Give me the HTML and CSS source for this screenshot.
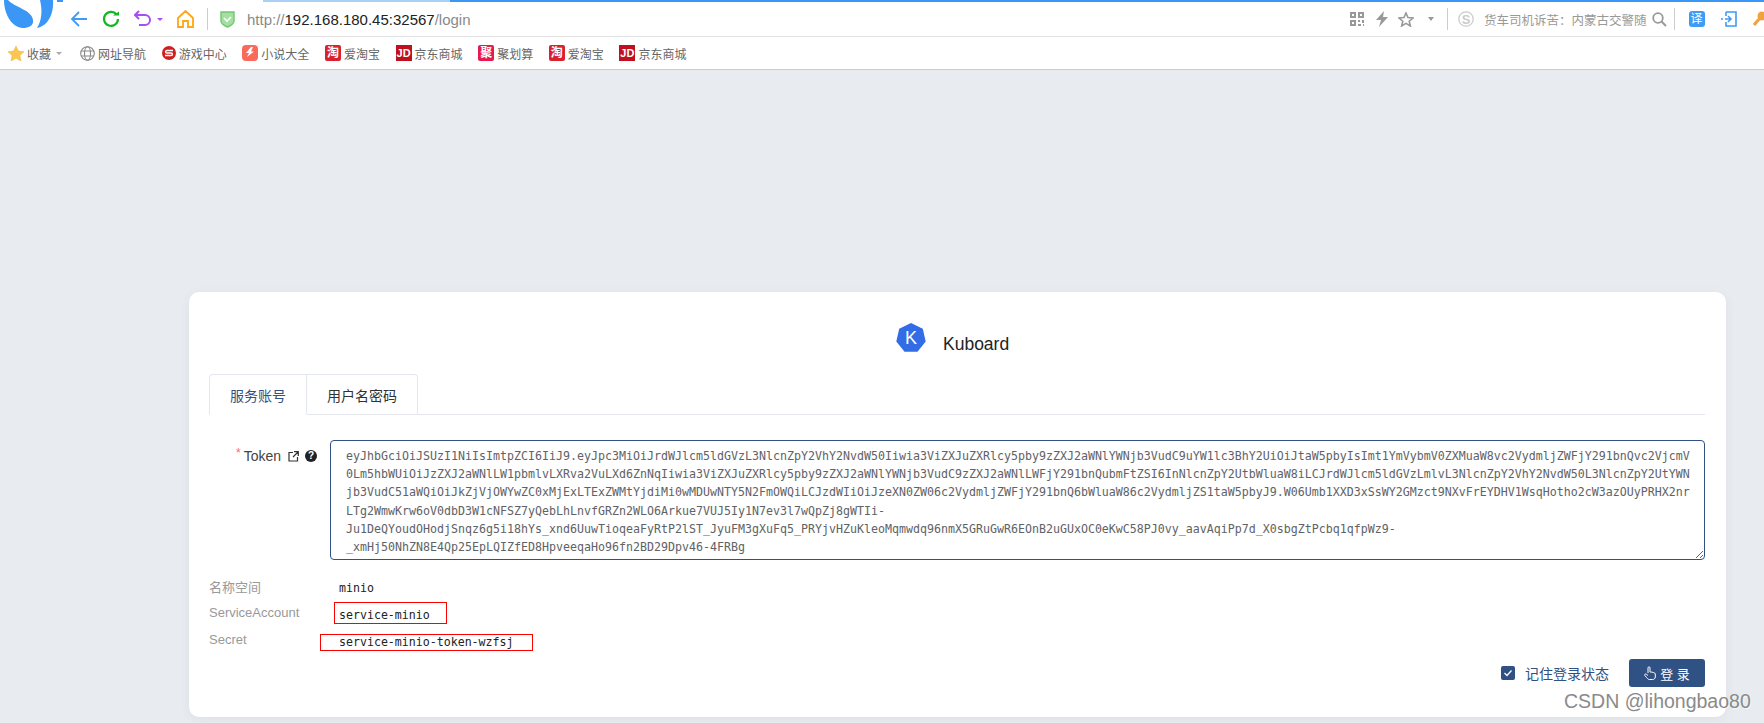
FILE: index.html
```html
<!DOCTYPE html>
<html lang="en">
<head>
    <meta charset="UTF-8">
    <title>Kuboard</title>
    <link rel="stylesheet" href="styles.css">
</head>
<body>
    <div class="progress"><span class="progress-done"></span></div>
    <svg class="app-logo" width="66" height="30" viewBox="0 0 66 30">
        <path d="M4 0H8C14 7 32 10 33 20C34 26 28 28 23 28C12 28 4 14 4 0Z" fill="#3b97f5"/>
        <path d="M40 0H53C54 14 48 26 37 28C41 22 43 12 40 0Z" fill="#3b97f5"/>
        <rect x="57" y="0" width="6" height="2" fill="#3b97f5"/>
    </svg>

    <header class="toolbar">
        <svg class="ico back" width="18" height="18" viewBox="0 0 18 18"><path d="M9 2L2 9L9 16M2 9H17" fill="none" stroke="#3f9bf5" stroke-width="1.8"/></svg>
        <svg class="ico reload" width="18" height="18" viewBox="0 0 18 18"><path d="M14.5 4.5A7 7 0 1 0 16 9" fill="none" stroke="#12b81f" stroke-width="2.2"/><path d="M11 5.500H17V1.500Z" fill="#12b81f"/></svg>
        <svg class="ico undo" width="18" height="18" viewBox="0 0 18 18"><path d="M1 5H11A5 5 0 0 1 11 15H5" fill="none" stroke="#a64ff0" stroke-width="2"/><path d="M5 1L1 5L5 9" fill="none" stroke="#a64ff0" stroke-width="2"/></svg>
        <span class="caret undo-caret"></span>
        <svg class="ico home" width="17" height="18" viewBox="0 0 17 18"><path d="M1 8L8.500 1L16 8V17H11V11H6V17H1Z" fill="none" stroke="#ffa516" stroke-width="1.800"/></svg>
        <span class="sep sep-url"></span>
        <svg class="ico shield" width="15" height="18" viewBox="0 0 15 18"><path d="M1 2H14V11C14 14 10 16 7.500 17C5 16 1 14 1 11Z" fill="#a4dfa2" stroke="#74c672" stroke-width="1.400"/><path d="M4 8L7 11L11 7" fill="none" stroke="#fff" stroke-width="1.600"/></svg>
        <div class="url">http://<b>192.168.180.45:32567</b>/login</div>
        <div class="toolbar-right">
            <svg class="ico" width="14" height="14" viewBox="0 0 14 14" fill="#999"><path d="M0 0H6V6H0ZM2 2V4H4V2ZM8 0H14V6H8ZM10 2V4H12V2ZM0 8H6V14H0ZM2 10V12H4V10ZM8 8H10V10H8ZM12 8H14V11H12ZM8 12H11V14H8ZM13 12H14V14H13Z" fill-rule="evenodd"/></svg>
            <svg class="ico bolt" width="12" height="16" viewBox="0 0 12 16"><path d="M8 0L0 9H5L3 16L12 6H7Z" fill="#999"/></svg>
            <svg class="ico star-o" width="16" height="15" viewBox="0 0 16 15"><path d="M8 1L10 5.600L15 6L11.200 9.200L12.400 14L8 11.400L3.600 14L4.800 9.200L1 6L6 5.600Z" fill="none" stroke="#999" stroke-width="1.600"/></svg>
            <span class="caret search-caret"></span>
            <span class="sep sep-search"></span>
            <svg class="ico sogou" width="16" height="16" viewBox="0 0 16 16"><circle cx="8" cy="8" r="7.200" fill="none" stroke="#ccc" stroke-width="1.300"/><text x="8" y="12.500" text-anchor="middle" class="sogou-s">S</text></svg>
            <div class="search-text">货车司机诉苦：内蒙古交警随</div>
            <svg class="ico" width="15" height="15" viewBox="0 0 15 15"><circle cx="6" cy="6" r="4.800" fill="none" stroke="#999" stroke-width="1.800"/><path d="M9.500 9.500L14 14" stroke="#999" stroke-width="2"/></svg>
            <span class="sep sep-tools"></span>
            <span class="fanyi">译</span>
            <svg class="ico" width="16" height="16" viewBox="0 0 16 16"><path d="M5 1H15V15H5V11M5 5V1" fill="none" stroke="#3f9bf5" stroke-width="1.600"/><path d="M0 8H2M4 8H10M7 5L10 8L7 11" fill="none" stroke="#3f9bf5" stroke-width="1.600"/></svg>
            <svg class="ico key" width="13" height="16" viewBox="0 0 13 16"><circle cx="9" cy="5" r="4.500" fill="#f2a23c"/><path d="M7 7L1 14" stroke="#f2a23c" stroke-width="3"/></svg>
        </div>
    </header>

    <nav class="bookmarks">
        <div class="mark fav">
            <svg width="16" height="15" viewBox="0 0 16 15"><path d="M8 0L10.400 5L16 5.700L11.900 9.500L13 15L8 12.300L3 15L4.100 9.500L0 5.700L5.600 5Z" fill="#fbc74f" stroke="#e9b04a" stroke-width=".5"/></svg>
            <span>收藏</span>
            <span class="caret fav-caret"></span>
        </div>
        <div class="mark">
            <svg width="15" height="15" viewBox="0 0 15 15"><g fill="none" stroke="#888" stroke-width="1.100"><circle cx="7.500" cy="7.500" r="6.800"/><ellipse cx="7.500" cy="7.500" rx="3" ry="6.800"/><path d="M1 5H14M1 10H14"/></g></svg>
            <span>网址导航</span>
        </div>
        <div class="mark">
            <svg width="14" height="14" viewBox="0 0 14 14"><circle cx="7" cy="7" r="7" fill="#cf1f1f"/><path d="M11 4.500H5C3 4.500 3 7 5 7H9C11 7 11 9.500 9 9.500H3" fill="none" stroke="#fff" stroke-width="1.300"/></svg>
            <span>游戏中心</span>
        </div>
        <div class="mark">
            <svg width="16" height="16" viewBox="0 0 16 16"><rect width="16" height="16" rx="4" fill="#fa6a5a"/><path d="M9 2L4 8H7L5 12L12 6.500H9L11 2Z" fill="#fff"/></svg>
            <span>小说大全</span>
        </div>
        <div class="mark">
            <span class="badge taobao">淘</span>
            <span>爱淘宝</span>
        </div>
        <div class="mark">
            <span class="badge jd">JD</span>
            <span>京东商城</span>
        </div>
        <div class="mark">
            <span class="badge juhs">聚</span>
            <span>聚划算</span>
        </div>
        <div class="mark">
            <span class="badge taobao">淘</span>
            <span>爱淘宝</span>
        </div>
        <div class="mark">
            <span class="badge jd">JD</span>
            <span>京东商城</span>
        </div>
    </nav>

    <main class="page">
        <section class="card">
            <div class="brand">
                <svg width="30" height="30" viewBox="0 0 30 30"><path d="M15 0L26.800 5.700L29.700 18.500L21.500 28.800H8.500L.3 18.500L3.200 5.700Z" fill="#326de6"/><text x="15" y="21" text-anchor="middle" class="brand-k">K</text></svg>
                <span class="brand-name">Kuboard</span>
            </div>

            <div class="tabs">
                <div class="tab active">服务账号</div>
                <div class="tab">用户名密码</div>
            </div>

            <div class="token-row">
                <label class="token-label">
                    <span class="req">*</span>Token
                    <svg class="link-ico" width="11" height="11" viewBox="0 0 11 11"><path d="M5 1.500H1V10H9.500V6M6 .7H10.300V5M10 1L5 6" fill="none" stroke="#333" stroke-width="1.200"/></svg>
                    <span class="help">?</span>
                </label>
                <textarea class="token" readonly>eyJhbGciOiJSUzI1NiIsImtpZCI6IiJ9.eyJpc3MiOiJrdWJlcm5ldGVzL3NlcnZpY2VhY2NvdW50Iiwia3ViZXJuZXRlcy5pby9zZXJ2aWNlYWNjb3VudC9uYW1lc3BhY2UiOiJtaW5pbyIsImt1YmVybmV0ZXMuaW8vc2VydmljZWFjY291bnQvc2VjcmV
0Lm5hbWUiOiJzZXJ2aWNlLW1pbmlvLXRva2VuLXd6ZnNqIiwia3ViZXJuZXRlcy5pby9zZXJ2aWNlYWNjb3VudC9zZXJ2aWNlLWFjY291bnQubmFtZSI6InNlcnZpY2UtbWluaW8iLCJrdWJlcm5ldGVzLmlvL3NlcnZpY2VhY2NvdW50L3NlcnZpY2UtYWN
jb3VudC51aWQiOiJkZjVjOWYwZC0xMjExLTExZWMtYjdiMi0wMDUwNTY5N2FmOWQiLCJzdWIiOiJzeXN0ZW06c2VydmljZWFjY291bnQ6bWluaW86c2VydmljZS1taW5pbyJ9.W06Umb1XXD3xSsWY2GMzct9NXvFrEYDHV1WsqHotho2cW3azOUyPRHX2nr
LTg2WmwKrw6oV0dbD3W1cNFSZ7yQebLhLnvfGRZn2WLO6Arkue7VUJ5Iy1N7ev3l7wQpZj8gWTIi-
Ju1DeQYoudOHodjSnqz6g5i18hYs_xnd6UuwTioqeaFyRtP2lST_JyuFM3gXuFq5_PRYjvHZuKleoMqmwdq96nmX5GRuGwR6EOnB2uGUxOC0eKwC58PJ0vy_aavAqiPp7d_X0sbgZtPcbq1qfpWz9-
_xmHj50NhZN8E4Qp25EpLQIZfED8HpveeqaHo96fn2BD29Dpv46-4FRBg</textarea>
            </div>

            <div class="info">
                <div class="info-row row-ns">
                    <span class="info-label">名称空间</span>
                    <span class="info-value">minio</span>
                </div>
                <div class="info-row row-sa">
                    <span class="info-label">ServiceAccount</span>
                    <span class="info-value">service-minio</span>
                    <span class="red-box box-sa"></span>
                </div>
                <div class="info-row row-secret">
                    <span class="info-label">Secret</span>
                    <span class="info-value">service-minio-token-wzfsj</span>
                    <span class="red-box box-secret"></span>
                </div>
            </div>

            <div class="actions">
                <span class="check"><svg width="14" height="14" viewBox="0 0 14 14"><path d="M3.500 7L6 9.500L10.500 4.500" fill="none" stroke="#fff" stroke-width="1.300"/></svg></span>
                <span class="remember">记住登录状态</span>
                <button class="login-btn">
                    <svg width="12" height="14" viewBox="0 0 12 14"><path d="M4 7V1.800C4 .5 6 .5 6 1.800V6C8 6 11.300 6.500 11.300 8V11C11.300 12.500 10 13.500 8.500 13.500H5.500C4 13.500 3.500 12.500 2.500 11.500L.8 9.500C.2 8.500 1.500 7.500 2.300 8.200L4 9.500" fill="none" stroke="#fff" stroke-width="1"/></svg>
                    <span>登 录</span>
                </button>
            </div>
        </section>
    </main>

    <div class="watermark">CSDN @lihongbao80</div>
</body>
</html>
```

FILE: styles.css
```css
* {
    box-sizing: border-box;
}

html, body {
    margin: 0;
    height: 723px;
    overflow: hidden;
}

body {
    position: relative;
    display: flex;
    flex-direction: column;
    background: #e8ecf1;
    font-family: "Liberation Sans", "Noto Sans CJK SC", sans-serif;
}

svg {
    display: block;
    flex: none;
}

.progress {
    position: absolute;
    top: 0;
    left: 263px;
    right: 0;
    height: 2px;
    background: #a8cff6;
}

.progress-done {
    position: absolute;
    top: 0;
    left: 187px;
    right: 0;
    height: 2px;
    background: #3b97f5;
}

.app-logo {
    position: absolute;
    top: 0;
    left: 0;
}

/* browser toolbar */
.toolbar {
    height: 37px;
    display: flex;
    align-items: center;
    padding: 2px 0 0 70px;
    background: #fff;
    border-bottom: 1px solid #e2e2e2;
}

.back { margin-right: 14px; }
.reload { margin-right: 14px; }
.undo { margin-right: 5px; }
.undo-caret { margin-right: 14px; }
.home { margin-right: 13px; }
.sep-url { margin-right: 12px; }
.shield { margin-right: 12px; }

.caret {
    width: 0;
    height: 0;
    flex: none;
    border-left: 3px solid transparent;
    border-right: 3px solid transparent;
    border-top: 3px solid #a64ff0;
}

.sep {
    width: 1px;
    height: 22px;
    flex: none;
    background: #ccc;
}

.url {
    font-size: 15px;
    color: #8a8a8a;
    white-space: nowrap;
}

.url b {
    font-weight: 400;
    color: #222;
}

.toolbar-right {
    margin-left: auto;
    width: 414px;
    display: flex;
    align-items: center;
}

.bolt { margin: 0 10px 0 12px; }
.star-o { margin-right: 14px; }

.search-caret {
    border-left-width: 3.500px;
    border-right-width: 3.500px;
    border-top: 4px solid #999;
    margin-right: 13px;
}

.sep-search { margin-right: 10px; }

.sogou-s {
    font: 700 13px "Liberation Sans", sans-serif;
    fill: #ccc;
}

.search-text {
    width: 163px;
    margin: 0 5px 0 10px;
    white-space: nowrap;
    font-size: 12.500px;
    color: #999;
}

.sep-tools { margin: 0 14px 0 7px; }

.fanyi {
    width: 16px;
    height: 16px;
    margin-right: 16px;
    flex: none;
    border-radius: 3px;
    background: #3f9bf5;
    color: #fff;
    font-size: 12px;
    line-height: 16px;
    text-align: center;
}

.key { margin-left: 16px; }

/* bookmarks */
.bookmarks {
    height: 33px;
    display: flex;
    align-items: center;
    gap: 15.600px;
    padding-left: 8px;
    background: #fff;
    border-bottom: 1px solid #ccc;
    font-size: 12px;
    color: #666;
}

.mark {
    display: flex;
    align-items: center;
    gap: 3px;
}

.fav {
    margin-right: 2.500px;
}

.fav-caret {
    border-top-color: #aaa;
    margin-left: 2px;
}

.badge {
    width: 16px;
    height: 16px;
    display: block;
    flex: none;
    color: #fff;
    font-size: 12px;
    font-weight: 700;
    line-height: 16px;
    text-align: center;
}

.taobao {
    background: #d8232f;
    border-radius: 2px;
}

.jd {
    background: #c0101e;
    font-size: 11px;
}

.juhs {
    background: #e8194f;
    border-radius: 2px;
}

/* login card */
.page {
    flex: 1;
    padding: 222px 0 0 189px;
}

.card {
    position: relative;
    width: 1537px;
    height: 425px;
    padding: 31px 21px 0 20px;
    background: #fff;
    border-radius: 10px;
    box-shadow: 0 2px 12px rgba(0, 0, 0, 0.05);
}

.brand {
    height: 30px;
    padding-left: 687px;
    display: flex;
    align-items: center;
}

.brand-k {
    font: 400 18px "Liberation Sans", sans-serif;
    fill: #fff;
}

.brand-name {
    margin: 12px 0 0 17px;
    font-size: 17.500px;
    color: #222;
}

.tabs {
    display: flex;
    height: 41px;
    margin-top: 21px;
    border-bottom: 1px solid #e4e7ed;
}

.tab {
    height: 41px;
    padding: 0 20px;
    display: flex;
    align-items: center;
    border: 1px solid #e4e7ed;
    border-left: 0;
    font-size: 14px;
    color: #303133;
}

.tab:last-child {
    border-top-right-radius: 4px;
}

.tab.active {
    border-left: 1px solid #e4e7ed;
    border-bottom-color: #fff;
    border-top-left-radius: 4px;
    color: #2f5183;
}

.token-row {
    display: flex;
    margin-top: 25px;
}

.token-label {
    width: 121px;
    flex: none;
    display: flex;
    align-items: flex-start;
    justify-content: flex-end;
    padding: 8px 13px 0 0;
    font-size: 14px;
    line-height: 16px;
    color: #444;
}

.req {
    color: #f56c6c;
    font-size: 12px;
    margin-right: 3px;
    line-height: 11px;
}

.link-ico {
    margin: 3px 0 0 7px;
}

.help {
    width: 12px;
    height: 12px;
    margin: 2px 0 0 6px;
    flex: none;
    border-radius: 50%;
    background: #222;
    color: #fff;
    font-size: 10px;
    font-weight: 700;
    line-height: 12px;
    text-align: center;
}

.token {
    display: block;
    flex: 1;
    height: 120px;
    padding: 6px 15px 4px;
    border: 1px solid #2f5183;
    border-radius: 4px;
    outline: 0;
    resize: vertical;
    overflow: hidden;
    white-space: pre;
    font-family: "DejaVu Sans Mono", monospace;
    font-size: 11.640px;
    line-height: 18.200px;
    color: #606266;
}

.info {
    margin-top: 20px;
}

.info-row {
    position: relative;
    display: flex;
    align-items: flex-start;
    font-size: 13px;
}

.row-ns { height: 25px; }
.row-sa { height: 27px; }
.row-secret { height: 20px; }

.info-label {
    width: 130px;
    flex: none;
    line-height: 15px;
    color: #999;
}

.info-value {
    padding-top: 3px;
    font-family: "DejaVu Sans Mono", monospace;
    font-size: 11.600px;
    line-height: 15px;
    color: #222;
}

.row-ns .info-value {
    padding-top: 1px;
}

/* red highlight boxes drawn over the screenshot */
.red-box {
    position: absolute;
    border: 1px solid #f00;
}

.box-sa {
    left: 125px;
    top: -3px;
    width: 113px;
    height: 22px;
}

.box-secret {
    left: 111px;
    top: 2px;
    width: 213px;
    height: 17px;
}

.actions {
    margin-top: 7px;
    display: flex;
    align-items: center;
    justify-content: flex-end;
}

.check {
    width: 14px;
    height: 14px;
    flex: none;
    border-radius: 2px;
    background: #2f5183;
}

.remember {
    margin: 0 20px 0 10px;
    font-size: 14px;
    color: #2f5183;
}

.login-btn {
    width: 76px;
    height: 28px;
    padding: 0;
    display: flex;
    align-items: center;
    justify-content: center;
    gap: 4px;
    border: 0;
    border-radius: 3px;
    background: #2f5183;
    color: #fff;
    font: 13px "Liberation Sans", "Noto Sans CJK SC", sans-serif;
}

.watermark {
    position: absolute;
    left: 1564px;
    top: 691px;
    font-size: 19.500px;
    line-height: 20px;
    color: #8a8a8a;
    white-space: nowrap;
    text-shadow: 1px 1px 0 rgba(255, 255, 255, 0.6);
}
```
